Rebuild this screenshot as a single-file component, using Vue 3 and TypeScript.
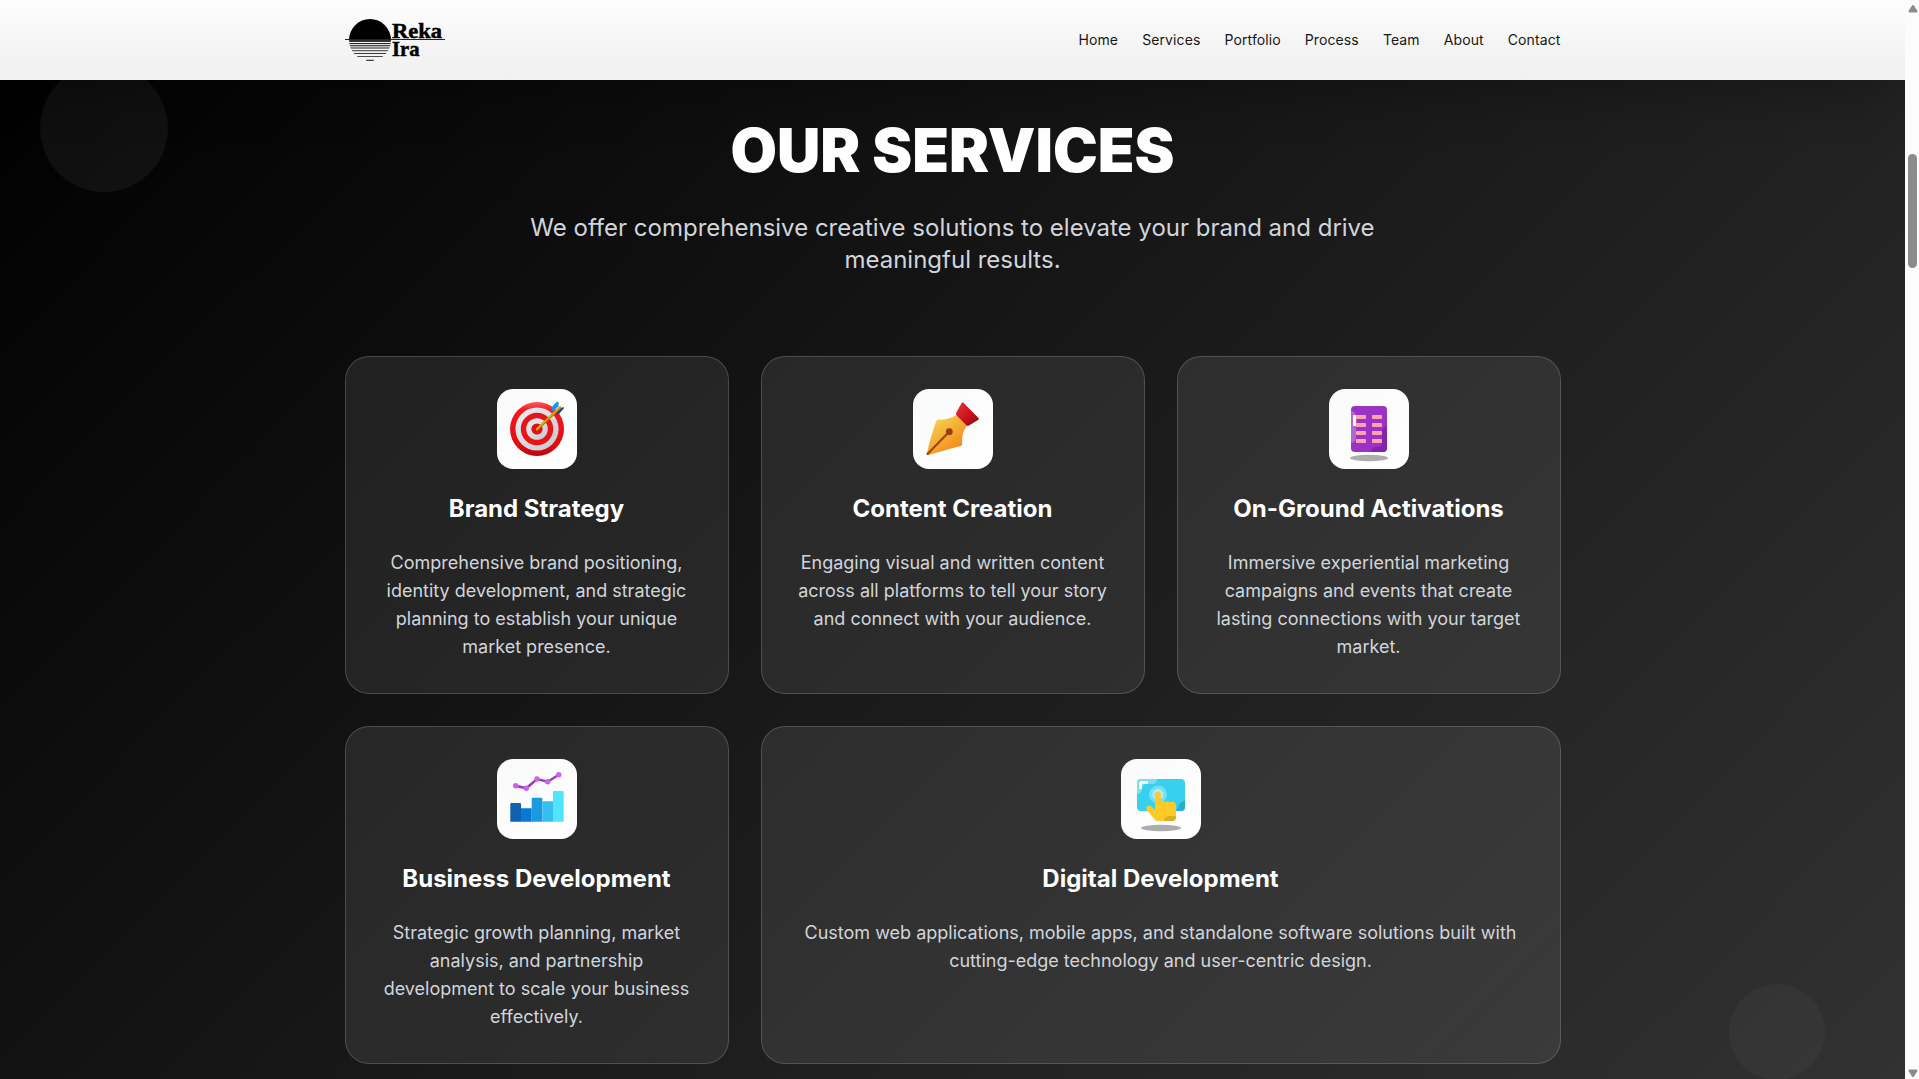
<script setup lang="ts">
interface Service {
  icon: string
  title: string
  text: string
  wide?: boolean
}

const links: string[] = ['Home', 'Services', 'Portfolio', 'Process', 'Team', 'About', 'Contact']

const services: Service[] = [
  {
    icon: 'target',
    title: 'Brand Strategy',
    text: 'Comprehensive brand positioning, identity development, and strategic planning to establish your unique market presence.',
  },
  {
    icon: 'pen',
    title: 'Content Creation',
    text: 'Engaging visual and written content across all platforms to tell your story and connect with your audience.',
  },
  {
    icon: 'building',
    title: 'On-Ground Activations',
    text: 'Immersive experiential marketing campaigns and events that create lasting connections with your target market.',
  },
  {
    icon: 'chart',
    title: 'Business Development',
    text: 'Strategic growth planning, market analysis, and partnership development to scale your business effectively.',
  },
  {
    icon: 'touch',
    title: 'Digital Development',
    text: 'Custom web applications, mobile apps, and standalone software solutions built with cutting-edge technology and user-centric design.',
    wide: true,
  },
]

const rows: number[] = [26, 34, 42, 50]
</script>

<template>
  <div class="window">
    <div class="page">
      <header class="header">
        <div class="header-inner">
          <svg class="logo" width="101" height="48" viewBox="0 0 101 48">
            <defs>
              <clipPath id="sun"><circle cx="25" cy="24" r="21" /></clipPath>
            </defs>
            <path d="M4 24a21 21 0 0 1 42 0z" fill="#000" />
            <g clip-path="url(#sun)" fill="#222">
              <rect x="4" y="23" width="42" height="3" fill="#333" />
              <rect x="4" y="27" width="42" height="1.1" />
              <rect x="4" y="29.2" width="42" height="1.1" />
              <rect x="4" y="31.5" width="42" height="1" />
              <rect x="4" y="34.3" width="42" height="0.9" />
              <rect x="4" y="37.1" width="42" height="0.9" />
              <rect x="4" y="40.2" width="42" height="0.8" />
              <rect x="21" y="43.8" width="8" height="1.1" />
            </g>
            <rect x="0" y="23" width="100" height="1" fill="#222" />
            <text x="47" y="22" textLength="50" lengthAdjust="spacingAndGlyphs">Reka</text>
            <text x="47" y="39.7" textLength="27.5" lengthAdjust="spacingAndGlyphs">Ira</text>
          </svg>
          <nav class="nav">
            <a v-for="l in links" :key="l">{{ l }}</a>
          </nav>
        </div>
      </header>

      <section class="services">
        <div class="orb orb-top"></div>
        <div class="orb orb-bottom"></div>
        <div class="container">
          <h2 class="heading">OUR SERVICES</h2>
          <p class="lead">
            We offer comprehensive creative solutions to elevate your brand and drive meaningful results.
          </p>
          <div class="grid">
            <article v-for="s in services" :key="s.title" class="card" :class="{ wide: s.wide }">
              <div class="tile">
                <svg v-if="s.icon === 'target'" width="80" height="80" viewBox="0 0 80 80">
                  <defs>
                    <linearGradient id="red" x1="0" y1="0" x2="0" y2="1">
                      <stop offset="0" stop-color="#fb5a5c" />
                      <stop offset="0.16" stop-color="#f0191d" />
                      <stop offset="0.8" stop-color="#e30b10" />
                      <stop offset="1" stop-color="#b80408" />
                    </linearGradient>
                    <linearGradient id="silver" x1="0" y1="0" x2="1" y2="1">
                      <stop offset="0" stop-color="#efeff3" />
                      <stop offset="1" stop-color="#c6c6ce" />
                    </linearGradient>
                  </defs>
                  <circle cx="40" cy="40" r="27" fill="url(#red)" />
                  <circle cx="40" cy="40" r="21.6" fill="url(#silver)" />
                  <circle cx="40" cy="40" r="16.2" fill="#e91418" />
                  <circle cx="40" cy="40" r="10.8" fill="url(#silver)" />
                  <circle cx="40" cy="40" r="5.6" fill="#e01014" />
                  <path d="M54.500 22.500v-4.300l5-5.200q2.300-.8 2.200 1.200l-.3 3-5 5z" fill="#1d93e6" />
                  <path d="M57.500 25.500l4.800-6.400 4.300-.9q.8.500.2 1.400l-4.700 5.200q-2.400.7-4.600.7z" fill="#0a45b5" />
                  <path d="M40.200 40.300L63 18.500" stroke="#d9a514" stroke-width="2.600" stroke-linecap="round" />
                  <path d="M40.800 41L63.400 19.400" stroke="#9a6412" stroke-width="0.800" stroke-linecap="round" />
                </svg>

                <svg v-else-if="s.icon === 'pen'" width="80" height="80" viewBox="0 0 80 80">
                  <defs>
                    <linearGradient id="gold" x1="0.2" y1="0.1" x2="0.75" y2="0.85">
                      <stop offset="0" stop-color="#f6d04f" />
                      <stop offset="0.5" stop-color="#f4ae35" />
                      <stop offset="1" stop-color="#f58a1c" />
                    </linearGradient>
                    <linearGradient id="cap" x1="0" y1="0" x2="1" y2="1">
                      <stop offset="0" stop-color="#e0363f" />
                      <stop offset="0.5" stop-color="#d0141d" />
                      <stop offset="1" stop-color="#7f0d10" />
                    </linearGradient>
                  </defs>
                  <path d="M13.700 65Q18 46 23.300 32q.5-1.200 2-1.300Q36 31 43.300 26L54 36.700Q48 44 49.300 55q0 1.300-1.200 1.800Q33 61 15 66.200q-1.300.2-1.300-1.200z" fill="url(#gold)" />
                  <path d="M14.500 65L36 43" stroke="#9a4312" stroke-width="2" stroke-linecap="round" />
                  <circle cx="36.300" cy="42.700" r="3.400" fill="#93400f" />
                  <path d="M48.500 14.200q.8-1.600 2.200-.3L65.500 29q1.200 1.300-.5 2l-9 5.600q-1.500.8-2.700-.3l-9.500-9.500q-1.300-1.300-.6-3z" fill="url(#cap)" />
                </svg>

                <svg v-else-if="s.icon === 'building'" width="80" height="80" viewBox="0 0 80 80">
                  <rect x="22" y="17" width="36" height="46" rx="4" fill="#9a33c4" />
                  <path d="M22 21.800q5 1 5 6v20.500q0 5-5 6z" fill="#b266d6" />
                  <path d="M58 37.500q-5 1-5 6V53q0 5-4.500 5H47q-5 0-5 5h12a4 4 0 0 0 4-4z" fill="#8424a8" />
                  <rect x="24" y="26" width="3.200" height="11" rx="1" fill="#fff" />
                  <g fill="#fda2ad">
                    <template v-for="y in rows" :key="y">
                      <rect x="27" :y="y" width="10" height="4" rx="0.8" />
                      <rect x="43" :y="y" width="10" height="4" rx="0.8" />
                    </template>
                  </g>
                  <ellipse cx="40" cy="69" rx="19" ry="3.200" fill="#adadad" />
                </svg>

                <svg v-else-if="s.icon === 'chart'" width="80" height="80" viewBox="0 0 80 80">
                  <path d="M13.300 62.700V45q0-1 1-1H23q1 0 1 1v17.700z" fill="#1062b0" />
                  <path d="M24 62.700V49.300h10.700v13.400z" fill="#0878d4" />
                  <path d="M34.700 62.700v-23q0-1 1-1h8.600q1 0 1 1v23z" fill="#1b9ae0" />
                  <path d="M45.300 62.700V42.300H56v20.400z" fill="#35bff0" />
                  <path d="M56 62.700V33q0-1 1-1h8.700q1 0 1 1v29.700z" fill="#50e4ff" />
                  <path d="M18.700 26.700l10.600 2.600L40 20l10.700 2.700 11-7" fill="none" stroke="#9a3cb8" stroke-width="2.500" />
                  <g fill="#cb62ec">
                    <circle cx="18.700" cy="26.700" r="2.700" />
                    <circle cx="29.300" cy="29.300" r="2.700" />
                    <circle cx="40" cy="20" r="2.700" />
                    <circle cx="50.700" cy="22.700" r="2.700" />
                    <circle cx="61.700" cy="15.800" r="2.700" />
                  </g>
                </svg>

                <svg v-else width="80" height="80" viewBox="0 0 80 80">
                  <rect x="16" y="20" width="48" height="32" rx="4" fill="#37d0ee" />
                  <path d="M20 20h16q0 5-5 5h-5q-5 0-5 5 0 5-5 5V24a4 4 0 0 1 4-4z" fill="#7bdff2" />
                  <path d="M64 42q-5 0-6.500 5-.5 3-3.500 5h6a4 4 0 0 0 4-4z" fill="#2aaed0" />
                  <path d="M19.500 30v-5.500q0-1 1-1H27" fill="none" stroke="#fff" stroke-width="2.800" />
                  <circle cx="37" cy="35.500" r="9" fill="#74dff3" />
                  <circle cx="37" cy="35.500" r="5.800" fill="#a9edf8" />
                  <path d="M34 35.700a2.900 2.900 0 0 1 5.800 0V43q1.500-1.300 3-.5l1.500.8q1.700-1.600 3.500-.5l1.300.7q1.600-1.500 3.400-.7 2.500 1 2.500 3.700V58a4 4 0 0 1-4 4H36q-1 0-1.700-.7L25.800 51q-1.500-2.200.3-3.700 2.200-1.500 4 0l3.900 3.500z" fill="#fdca28" />
                  <path d="M55 56.500q-1 .5-3.500.5h-3q-5 0-5.500 5h8a4 4 0 0 0 4-4z" fill="#dcae20" />
                  <ellipse cx="40" cy="69" rx="20" ry="3.200" fill="#adadad" />
                </svg>
              </div>
              <h3>{{ s.title }}</h3>
              <p>{{ s.text }}</p>
            </article>
          </div>
        </div>
      </section>
    </div>

    <aside class="scrollbar">
      <svg width="10" height="8" viewBox="0 0 10 8"><path d="M4 .5q1-1 2 0l3.300 5.200Q9.800 7.500 8.500 7.500h-7Q.2 7.500.7 5.700z" fill="#8b8b8b" /></svg>
      <div class="thumb"></div>
      <svg class="down" width="10" height="8" viewBox="0 0 10 8"><path d="M4 7.500q1 1 2 0l3.300-5.200Q9.800.5 8.500.5h-7Q.2.5.7 2.300z" fill="#8b8b8b" /></svg>
    </aside>
  </div>
</template>

<style>
html,
body {
  margin: 0;
  overflow: hidden;
}
</style>

<style scoped>
.window {
  display: flex;
  height: 1079px;
  overflow: hidden;
  font-family: Inter, "Liberation Sans", sans-serif;
}
.page {
  flex: 1;
  min-width: 0;
  height: 1079px;
  overflow: hidden;
}
.header {
  position: relative;
  z-index: 2;
  height: 80px;
  background: linear-gradient(180deg, #fefefe 0%, #f4f4f4 58%, #f1f1f1 100%);
  box-shadow: 0 25px 50px -12px rgba(0, 0, 0, 0.25);
}
.header-inner {
  box-sizing: border-box;
  max-width: 1280px;
  height: 80px;
  margin: 0 auto;
  padding: 0 32px;
  display: flex;
  align-items: center;
  justify-content: space-between;
}
.logo text {
  font-family: "Liberation Serif", serif;
  font-weight: 700;
  font-size: 21.5px;
  fill: #000;
  stroke: #000;
  stroke-width: 0.5px;
}
.nav {
  display: flex;
  gap: 24px;
  font-size: 14px;
  line-height: 20px;
  letter-spacing: 0.11px;
  color: #171717;
}
.services {
  position: relative;
  box-sizing: border-box;
  height: 1136px;
  margin-top: -56px;
  padding: 96px 0;
  background: linear-gradient(135deg, #000 0%, #1a1a1a 50%, #333 100%);
}
.orb {
  position: absolute;
  border-radius: 50%;
}
.orb-top {
  top: 40px;
  left: 40px;
  width: 128px;
  height: 128px;
  background: rgba(255, 255, 255, 0.05);
}
.orb-bottom {
  right: 80px;
  bottom: 80px;
  width: 96px;
  height: 96px;
  background: rgba(255, 255, 255, 0.03);
}
.container {
  position: relative;
  box-sizing: border-box;
  max-width: 1280px;
  margin: 0 auto;
  padding: 0 32px;
  text-align: center;
}
.heading {
  margin: 0 0 32px;
  font-size: 60px;
  line-height: 60px;
  font-weight: 900;
  color: #fff;
}
.lead {
  max-width: 896px;
  margin: 0 auto 80px;
  font-size: 24px;
  line-height: 32px;
  color: #d1d5db;
}
.grid {
  display: grid;
  grid-template-columns: repeat(3, 1fr);
  gap: 32px;
}
.card {
  box-sizing: border-box;
  padding: 32px;
  border: 1px solid rgba(255, 255, 255, 0.17);
  border-radius: 24px;
  background: linear-gradient(135deg, rgba(255, 255, 255, 0.09), rgba(255, 255, 255, 0.075)) border-box;
}
.wide {
  grid-column: span 2;
}
.tile {
  width: 80px;
  height: 80px;
  margin: 0 auto 24px;
  border-radius: 16px;
  background: linear-gradient(135deg, #f9fafb, #fff);
}
.tile svg {
  display: block;
}
.card h3 {
  margin: 0 0 24px;
  font-size: 24px;
  line-height: 32px;
  font-weight: 700;
  color: #fff;
}
.card p {
  margin: 0;
  font-size: 18px;
  line-height: 28px;
  color: #d1d5db;
}
.scrollbar {
  box-sizing: border-box;
  width: 14px;
  height: 1079px;
  padding: 5px 1px 2px 3px;
  display: flex;
  flex-direction: column;
  background: #fcfcfc;
}
.thumb {
  width: 9px;
  height: 114px;
  margin-top: 141px;
  border-radius: 5px;
  background: #8b8b8b;
}
.down {
  margin-top: auto;
}
</style>
